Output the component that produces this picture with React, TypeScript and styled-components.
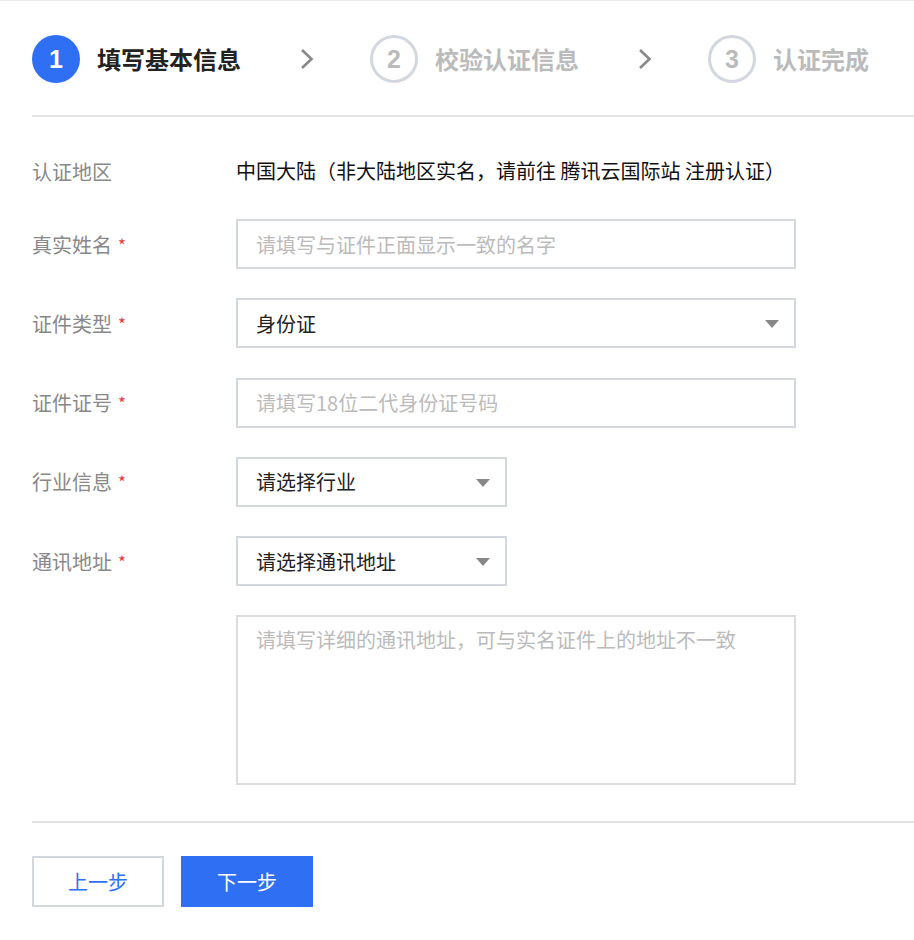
import styled, { createGlobalStyle } from "styled-components";

const GlobalStyle = createGlobalStyle`
  html, body {
    margin: 0;
    padding: 0;
    background: #fff;
  }
  body {
    border-top: 1px solid #ebebee;
    font-family: "Noto Sans CJK SC", "Noto Sans", sans-serif;
  }
  * {
    box-sizing: border-box;
  }
`;

const steps = [
  { num: "1", title: "填写基本信息" },
  { num: "2", title: "校验认证信息" },
  { num: "3", title: "认证完成" },
];

const Chevron = () => (
  <svg width="14" height="22" viewBox="0 0 14 22">
    <path d="M2 2 L11.5 11 L2 20" fill="none" stroke="#888" strokeWidth="2.6" />
  </svg>
);

const Caret = () => (
  <svg width="14" height="8" viewBox="0 0 14 8">
    <path d="M0 0 H14 L7 8 Z" fill="#888" />
  </svg>
);

const App = () => {
  return (
    <>
      <GlobalStyle />
      <Page>
        <Steps>
          {steps.map((s, i) => (
            <StepGroup key={s.num}>
              {i > 0 && (
                <Separator>
                  <Chevron />
                </Separator>
              )}
              <Step>
                <StepCircle active={i === 0}>{s.num}</StepCircle>
                <StepTitle active={i === 0}>{s.title}</StepTitle>
              </Step>
            </StepGroup>
          ))}
        </Steps>
        <Divider />
        <Form>
          <InfoRow>
            <Label>认证地区</Label>
            <Value>中国大陆（非大陆地区实名，请前往 腾讯云国际站 注册认证）</Value>
          </InfoRow>
          <Field>
            <Label>
              真实姓名<Star>*</Star>
            </Label>
            <Input placeholder="请填写与证件正面显示一致的名字" />
          </Field>
          <Field>
            <Label>
              证件类型<Star>*</Star>
            </Label>
            <Select wide>
              <span>身份证</span>
              <Caret />
            </Select>
          </Field>
          <Field>
            <Label>
              证件证号<Star>*</Star>
            </Label>
            <Input placeholder="请填写18位二代身份证号码" />
          </Field>
          <Field>
            <Label>
              行业信息<Star>*</Star>
            </Label>
            <Select>
              <span>请选择行业</span>
              <Caret />
            </Select>
          </Field>
          <Field>
            <Label>
              通讯地址<Star>*</Star>
            </Label>
            <Select>
              <span>请选择通讯地址</span>
              <Caret />
            </Select>
          </Field>
          <Field>
            <Label />
            <TextArea placeholder="请填写详细的通讯地址，可与实名证件上的地址不一致" />
          </Field>
        </Form>
        <Divider />
        <Actions>
          <Button>上一步</Button>
          <Button primary>下一步</Button>
        </Actions>
      </Page>
    </>
  );
};

export default App;

const Page = styled.div`
  padding: 34px 0 30px 32px;
`;

const Steps = styled.div`
  display: flex;
  align-items: center;
  height: 48px;
  margin-bottom: 32px;
`;

const StepGroup = styled.div`
  display: flex;
  align-items: center;
`;

const Step = styled.div`
  display: flex;
  align-items: center;
  gap: 17px;
`;

const Separator = styled.div`
  width: 129px;
  display: flex;
  justify-content: center;
  align-items: center;
  padding-left: 2px;
`;

const StepCircle = styled.div<{ active: boolean }>`
  width: 48px;
  height: 48px;
  border-radius: 50%;
  display: flex;
  align-items: center;
  justify-content: center;
  font-family: "Liberation Sans", Arial, sans-serif;
  font-weight: bold;
  font-size: 25px;
  color: ${(p) => (p.active ? "#fff" : "#bbbbbb")};
  background: ${(p) => (p.active ? "#2f6ff4" : "#fff")};
  border: ${(p) => (p.active ? "none" : "3px solid #d3d7df")};
`;

const StepTitle = styled.div<{ active: boolean }>`
  font-size: 24px;
  font-weight: bold;
  line-height: 30px;
  color: ${(p) => (p.active ? "#222" : "#bbbbbb")};
`;

const Divider = styled.div`
  height: 2px;
  background: #e3e4e8;
`;

const Form = styled.div`
  display: flex;
  flex-direction: column;
  gap: 29.25px;
  padding: 39px 0 36px;
`;

const InfoRow = styled.div`
  display: flex;
  align-items: center;
  height: 30px;
  margin-bottom: 3.75px;
`;

const Field = styled.div`
  display: flex;
  align-items: flex-start;
`;

const Label = styled.div`
  width: 204px;
  height: 50px;
  flex-shrink: 0;
  display: flex;
  align-items: center;
  font-size: 20px;
  color: #888;
  ${InfoRow} & {
    height: 30px;
  }
`;

const Star = styled.span`
  color: #e0403f;
  font-size: 17px;
  margin-left: 6px;
`;

const Value = styled.div`
  font-size: 20px;
  line-height: 30px;
  color: #111;
  white-space: nowrap;
`;

const Input = styled.input`
  display: block;
  width: 560px;
  height: 50px;
  margin: 0;
  border: 2px solid #d3d7de;
  border-radius: 0;
  padding: 0 18px;
  font-family: inherit;
  font-size: 20px;
  color: #222;
  outline: none;
  &::placeholder {
    color: #bbbbbb;
  }
`;

const Select = styled.div<{ wide?: boolean }>`
  width: ${(p) => (p.wide ? "560px" : "271px")};
  height: 50px;
  border: 2px solid #d3d7de;
  padding: 0 15px 0 18px;
  display: flex;
  align-items: center;
  justify-content: space-between;
  font-size: 20px;
  color: #222;
  svg {
    margin-top: 2px;
  }
`;

const TextArea = styled.textarea`
  display: block;
  width: 560px;
  height: 170px;
  margin: 0;
  border: 2px solid #dcdcde;
  border-radius: 0;
  padding: 8px 18px;
  font-family: inherit;
  font-size: 20px;
  line-height: 30px;
  color: #222;
  resize: none;
  outline: none;
  &::placeholder {
    color: #bbbbbb;
  }
`;

const Actions = styled.div`
  display: flex;
  gap: 17px;
  margin-top: 33px;
`;

const Button = styled.button<{ primary?: boolean }>`
  width: 132px;
  height: 51px;
  border-radius: 0;
  font-family: inherit;
  font-size: 20px;
  cursor: pointer;
  color: ${(p) => (p.primary ? "#fff" : "#2f6ff4")};
  background: ${(p) => (p.primary ? "#2f6ff4" : "#fff")};
  border: ${(p) => (p.primary ? "none" : "2px solid #d3d7de")};
`;
